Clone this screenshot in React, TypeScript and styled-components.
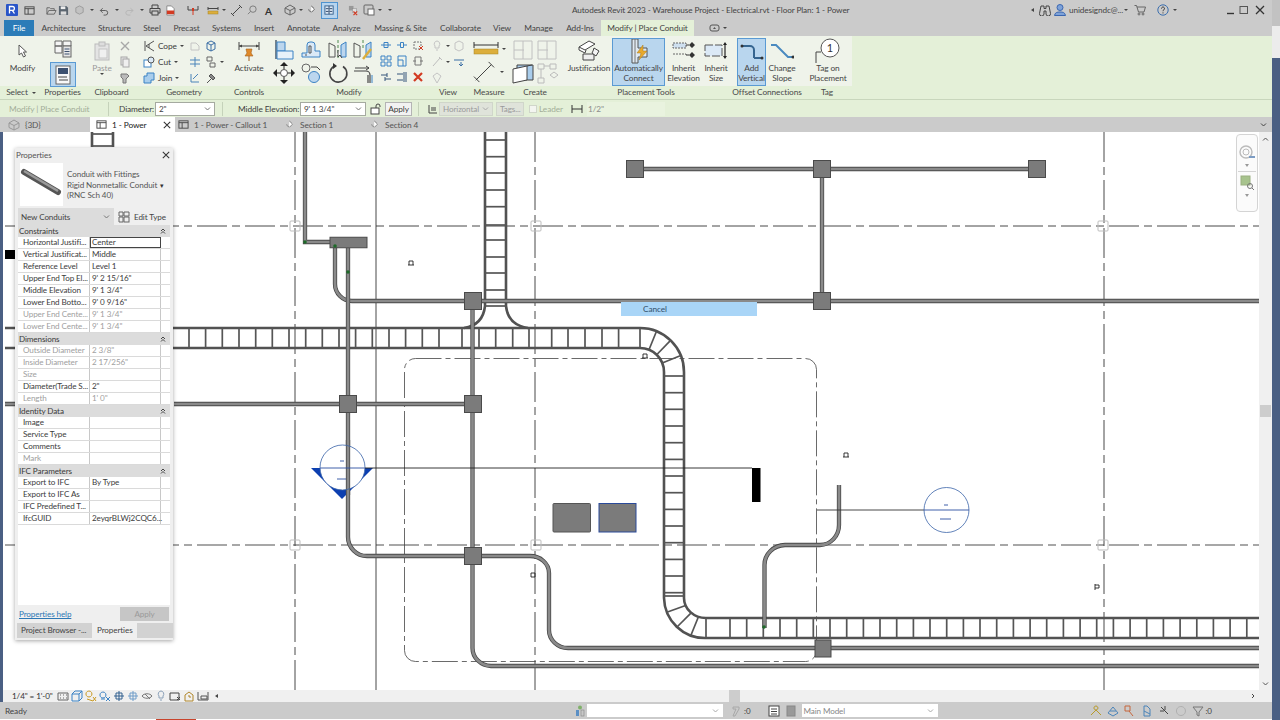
import React from 'react';
import styled, { createGlobalStyle } from 'styled-components';

const GlobalStyle = createGlobalStyle`
  html, body { margin: 0; padding: 0; width: 1280px; height: 720px; overflow: hidden; }
  body {
    font-family: "Lato", "Open Sans", sans-serif;
    font-size: 8.3px;
    letter-spacing: -0.1px;
    color: #3c3c3c;
    background: linear-gradient(to bottom, #c2c2c2 0 26px, #ececec 26px 58px, #4a5f83 58px);
  }
`;

const Window = styled.div`
  width: 1272px;
  height: 720px;
  display: flex;
  flex-direction: column;
`;

const TitleBar = styled.div`
  height: 20px;
  display: flex;
  align-items: center;
  background: #cbcbcb;
  padding-left: 6px;
`;

const Slot = styled.span<{ $ml?: number }>`
  display: flex;
  align-items: center;
  flex: none;
  margin-left: ${(p) => p.$ml ?? 0}px;
`;

const Caret = styled.span<{ $ml?: number }>`
  flex: none;
  width: 0;
  height: 0;
  margin-left: ${(p) => p.$ml ?? 0}px;
  border-left: 2px solid transparent;
  border-right: 2px solid transparent;
  border-top: 2px solid #444;
`;

const LeftCaret = styled.span<{ $ml?: number }>`
  flex: none;
  width: 0;
  height: 0;
  margin-left: ${(p) => p.$ml ?? 0}px;
  border-top: 2.5px solid transparent;
  border-bottom: 2.5px solid transparent;
  border-right: 3px solid #444;
`;

const ThinLines = styled.span<{ $ml?: number }>`
  flex: none;
  width: 15px;
  height: 15px;
  margin-left: ${(p) => p.$ml ?? 0}px;
  display: flex;
  align-items: center;
  justify-content: center;
  background: #b7d4ee;
  border: 1px solid #4f93cf;
`;

const WindowTitle = styled.span`
  margin-left: 180px;
  font-size: 8.2px;
  white-space: nowrap;
  width: 276px;
  flex: none;
  color: #444;
`;

const UserName = styled.span`
  flex: none;
  margin-left: 3px;
  width: 55px;
  font-size: 8.2px;
  white-space: nowrap;
  color: #444;
`;

const TabBar = styled.div`
  height: 16px;
  background: #cbcbcb;
`;

const RibbonTab = styled.div<{ $x: number; $w: number; $kind?: 'file' | 'context' }>`
  position: absolute;
  top: 20px;
  left: ${(p) => p.$x}px;
  width: ${(p) => p.$w}px;
  height: 16px;
  line-height: 17px;
  display: flex;
  justify-content: center;
  align-items: center;
  white-space: nowrap;
  font-size: 8.3px;
  background: ${(p) => (p.$kind === 'file' ? '#2c7cb8' : p.$kind === 'context' ? '#e4f0d8' : 'transparent')};
  color: ${(p) => (p.$kind === 'file' ? '#fff' : '#444')};
`;

const Ribbon = styled.div`
  height: 63px;
  display: flex;
  background: #e4f0d8;
`;

const Panel = styled.div<{ $w: number }>`
  width: ${(p) => p.$w}px;
  flex: none;
  display: flex;
  flex-direction: column;
`;

const PanelBody = styled.div<{ $pl?: number }>`
  height: 50px;
  display: flex;
  align-items: flex-start;
  padding-left: ${(p) => p.$pl ?? 0}px;
  background: #eff3ea;
`;

const PanelLabel = styled.div`
  height: 13px;
  line-height: 13px;
  display: flex;
  justify-content: center;
  align-items: center;
  gap: 4px;
  font-size: 8.3px;
  color: #4a4a4a;
  white-space: nowrap;
`;

const Tool = styled.div<{ $w: number; $active?: boolean; $muted?: boolean; $ml?: number }>`
  width: ${(p) => p.$w}px;
  height: 48px;
  flex: none;
  box-sizing: border-box;
  margin-top: 2px;
  margin-left: ${(p) => p.$ml ?? 0}px;
  display: flex;
  flex-direction: column;
  align-items: center;
  font-size: 8.3px;
  line-height: 10px;
  text-align: center;
  white-space: nowrap;
  color: ${(p) => (p.$muted ? '#9a9a9a' : '#454545')};
  background: ${(p) => (p.$active ? '#b9d6ee' : 'transparent')};
  outline: ${(p) => (p.$active ? '1px solid #5a9ad3' : 'none')};
  outline-offset: -1px;
`;

const ToolIcon = styled.div`
  height: 25px;
  flex: none;
  display: flex;
  align-items: center;
  justify-content: center;
`;

const PropertiesStack = styled.div`
  width: 41px;
  display: flex;
  flex-direction: column;
  align-items: center;
  gap: 3px;
  padding-top: 3px;
`;

const ActiveSquare = styled.div`
  width: 26px;
  height: 25px;
  display: flex;
  align-items: center;
  justify-content: center;
  background: #b9d6ee;
  border: 1px solid #5a9ad3;
  box-sizing: border-box;
`;

const SmallColumn = styled.div<{ $w: number; $ml?: number }>`
  width: ${(p) => p.$w}px;
  margin-left: ${(p) => p.$ml ?? 0}px;
  flex: none;
  display: flex;
  flex-direction: column;
  padding-top: 2px;
`;

const SmallRow = styled.div<{ $h?: number }>`
  height: ${(p) => p.$h ?? 16}px;
  display: flex;
  align-items: center;
  gap: 3px;
  font-size: 8.3px;
  white-space: nowrap;
`;

const ModifyGrid = styled.div`
  display: grid;
  grid-template-columns: 26px 28px 25px 26px;
  grid-auto-rows: 23px;
  justify-items: center;
  align-items: center;
  padding-top: 2px;
`;

const CreateGrid = styled.div`
  display: grid;
  grid-template-columns: 24px 24px;
  grid-auto-rows: 23px;
  justify-items: center;
  align-items: center;
  padding-top: 2px;
`;

const SmallGrid = styled.div`
  display: grid;
  grid-template-columns: repeat(3, 16px);
  grid-auto-rows: 16px;
  justify-items: center;
  align-items: center;
  padding-top: 1px;
  margin-left: 2px;
`;

const OptionsBar = styled.div`
  height: 17px;
  border-top: 1px solid #c8d6bc;
  display: flex;
  align-items: center;
  background: #e4f0d8;
  white-space: nowrap;
  font-size: 8.3px;
`;

const OptionText = styled.span<{ $ml: number; $w: number; $muted?: boolean }>`
  flex: none;
  width: ${(p) => p.$w}px;
  margin-left: ${(p) => p.$ml}px;
  color: ${(p) => (p.$muted ? '#a3ae99' : '#404040')};
`;

const OptionDivider = styled.span<{ $ml: number }>`
  flex: none;
  width: 1px;
  height: 14px;
  margin-left: ${(p) => p.$ml}px;
  background: #c5d2ba;
`;

const Combo = styled.div<{ $ml: number; $w: number; $disabled?: boolean }>`
  flex: none;
  box-sizing: border-box;
  margin-left: ${(p) => p.$ml}px;
  width: ${(p) => p.$w}px;
  height: 14px;
  padding: 0 3px;
  display: flex;
  align-items: center;
  justify-content: space-between;
  border: 1px solid ${(p) => (p.$disabled ? '#d0d6ca' : '#a5aaa0')};
  background: ${(p) => (p.$disabled ? '#dfe3da' : '#fff')};
  color: ${(p) => (p.$disabled ? '#9a9a9a' : '#404040')};
  font-size: 8.1px;
`;

const ApplyButton = styled.div`
  flex: none;
  box-sizing: border-box;
  margin-left: 3px;
  width: 27px;
  height: 14px;
  line-height: 12px;
  text-align: center;
  background: #f2f2f2;
  border: 1px solid #b4b4b4;
`;

const WideInput = styled.div`
  flex: none;
  box-sizing: border-box;
  margin-left: 4px;
  width: 78px;
  height: 14px;
  line-height: 14px;
  padding-left: 1px;
  color: #8b8b8b;
  background: #e9f3df;
`;

const CheckBox = styled.span`
  flex: none;
  box-sizing: border-box;
  width: 8px;
  height: 8px;
  margin-left: 5px;
  background: #f3f5f0;
  border: 1px solid #d0d6ca;
`;

const DocTabs = styled.div`
  height: 15px;
  display: flex;
  align-items: center;
  background: #cbcbcb;
`;

const DocTab = styled.div<{ $w: number; $active?: boolean; $ml?: number; $pl?: number }>`
  flex: none;
  box-sizing: border-box;
  width: ${(p) => p.$w}px;
  height: 15px;
  margin-left: ${(p) => p.$ml ?? 0}px;
  padding-left: ${(p) => p.$pl ?? 0}px;
  display: flex;
  align-items: center;
  gap: 5px;
  white-space: nowrap;
  font-size: 8.3px;
  background: ${(p) => (p.$active ? '#fff' : 'transparent')};
  color: ${(p) => (p.$active ? '#222' : '#555')};
`;

const TabClose = styled.span`
  margin-left: auto;
  margin-right: 4px;
`;

const TabMenu = styled.span`
  margin-left: auto;
  margin-right: 5px;
`;

const Workspace = styled.div`
  height: 558px;
  margin-left: 3px;
  position: relative;
  display: flex;
  background: #fff;
`;

const DrawingArea = styled.div`
  flex: 1;
  overflow: hidden;
  svg { display: block; }
`;

const VScroll = styled.div`
  width: 13px;
  flex: none;
  display: flex;
  flex-direction: column;
  align-items: center;
  background: #f0f0f0;
  font-size: 8px;
  color: #555;
`;

const VThumb = styled.div`
  width: 11px;
  height: 12px;
  margin-top: 259px;
  margin-bottom: auto;
  background: #cdcdcd;
`;

const ArrowSlot = styled.span`
  height: 14px;
  display: flex;
  align-items: center;
`;

const CancelStrip = styled.div`
  position: absolute;
  left: 618px;
  top: 170px;
  width: 136px;
  height: 14px;
  line-height: 14px;
  padding-left: 22px;
  box-sizing: border-box;
  font-size: 8.3px;
  background: #a9d5f7;
  color: #33506b;
`;

const NavBar = styled.div`
  position: absolute;
  left: 1233px;
  top: 2px;
  width: 22px;
  height: 78px;
  box-sizing: border-box;
  padding-top: 8px;
  display: flex;
  flex-direction: column;
  align-items: center;
  border: 1px solid #d4d4d4;
  border-radius: 4px;
  background: #fbfbfb;
`;

const NavRule = styled.div`
  width: 18px;
  height: 1px;
  margin: 4px 0 3px;
  background: #d4d4d4;
`;

const NavCaret = styled.span`
  width: 0;
  height: 0;
  margin-top: 3px;
  border-left: 2px solid transparent;
  border-right: 2px solid transparent;
  border-top: 3px solid #999;
`;

const PropsPalette = styled.div`
  position: absolute;
  left: 12px;
  top: 16px;
  width: 158px;
  height: 492px;
  box-sizing: border-box;
  padding: 0 3px 2px;
  display: flex;
  flex-direction: column;
  background: #efefef;
  box-shadow: 0 1px 4px rgba(0, 0, 0, 0.35);
  font-size: 8.1px;
`;

const PaletteTitle = styled.div`
  height: 14px;
  display: flex;
  align-items: center;
  justify-content: space-between;
  color: #555;
  margin-left: -2px;
`;

const TypeRow = styled.div`
  height: 45px;
  display: flex;
  align-items: flex-start;
  gap: 4px;
  margin: 1px 0 0 2px;
`;

const TypePreview = styled.div`
  width: 43px;
  height: 43px;
  flex: none;
  display: flex;
  align-items: center;
  justify-content: center;
  background: #fff;
`;

const TypeName = styled.div`
  padding-top: 6px;
  line-height: 10.7px;
  color: #555;
  white-space: nowrap;
  span { margin-left: 3px; font-size: 7px; color: #333; }
`;

const InstanceRow = styled.div`
  height: 17px;
  display: flex;
  align-items: center;
  gap: 4px;
`;

const InstanceCombo = styled.div`
  width: 96px;
  height: 17px;
  box-sizing: border-box;
  padding: 0 4px 0 3px;
  display: flex;
  align-items: center;
  justify-content: space-between;
  background: #dcdcdc;
  color: #444;
`;

const EditType = styled.div`
  display: flex;
  align-items: center;
  gap: 4px;
  color: #444;
`;

const PropTable = styled.div`
  background: #fff;
`;

const SectionRow = styled.div`
  height: 12px;
  display: flex;
  align-items: center;
  justify-content: space-between;
  padding: 0 4px 0 1px;
  background: #dcdcdc;
  color: #3a3a3a;
`;

const PropRow = styled.div<{ $muted?: boolean }>`
  height: 12px;
  box-sizing: border-box;
  display: grid;
  grid-template-columns: 72px 71px 9px;
  border-bottom: 1px solid #dadada;
  color: ${(p) => (p.$muted ? '#a0a0a0' : '#3c3c3c')};
  white-space: nowrap;
  line-height: 11px;
`;

const PropName = styled.div`
  padding-left: 5px;
  border-right: 1px solid #c8c8c8;
`;

const PropValue = styled.div<{ $focus?: boolean }>`
  padding-left: 2px;
  outline: ${(p) => (p.$focus ? '1px solid #444' : 'none')};
  outline-offset: -1px;
  border-right: 1px solid #c8c8c8;
`;

const PaletteBlank = styled.div`
  flex: 1;
  background: #fff;
`;

const PaletteFoot = styled.div`
  height: 18px;
  display: flex;
  align-items: center;
  justify-content: space-between;
  padding: 0 1px;
`;

const HelpLink = styled.span`
  color: #2d78b5;
  text-decoration: underline;
`;

const DimApply = styled.div`
  width: 49px;
  height: 14px;
  line-height: 14px;
  text-align: center;
  background: #c6c6c6;
  color: #9a9a9a;
`;

const PaletteTabs = styled.div`
  height: 15px;
  display: flex;
  align-items: stretch;
  margin: 0 -1px;
`;

const PaletteTab = styled.div<{ $w: number; $on?: boolean }>`
  width: ${(p) => p.$w}px;
  flex: none;
  line-height: 15px;
  padding-left: ${(p) => (p.$on ? 5 : 4)}px;
  box-sizing: border-box;
  white-space: nowrap;
  background: ${(p) => (p.$on ? 'transparent' : '#d2d2d2')};
  color: #444;
`;

const ViewBar = styled.div`
  height: 12px;
  margin-left: 3px;
  display: flex;
  align-items: center;
  background: #f0f0f0;
  font-size: 8.1px;
  color: #333;
  position: relative;
`;

const ScaleText = styled.span`
  flex: none;
  width: 45px;
  margin-left: 9px;
  white-space: nowrap;
`;

const HThumb = styled.span`
  position: absolute;
  left: 726px;
  top: 0;
  width: 11px;
  height: 12px;
  background: #cdcdcd;
`;

const ScrollEnd = styled.span`
  display: flex;
  margin-left: auto;
  margin-right: 16px;
`;

const StatusBar = styled.div`
  height: 17px;
  display: flex;
  align-items: center;
  background: #cbcbcb;
  font-size: 8.3px;
  color: #444;
`;

const ReadyText = styled.span`
  flex: none;
  width: 568px;
  margin-left: 5px;
`;

const StatusCombo = styled.div<{ $w: number; $ml: number }>`
  flex: none;
  box-sizing: border-box;
  width: ${(p) => p.$w}px;
  margin-left: ${(p) => p.$ml}px;
  height: 13px;
  padding: 0 4px 0 1px;
  display: flex;
  align-items: center;
  justify-content: space-between;
  background: #fff;
  color: #888;
  font-size: 8.1px;
`;

const StatusCount = styled.span<{ $ml?: number }>`
  flex: none;
  margin-left: ${(p) => p.$ml ?? 0}px;
  font-size: 8px;
`;

const BottomEdge = styled.div`
  height: 1px;
  padding-left: 156px;
  background: #fff;
`;

const RedMark = styled.div`
  width: 40px;
  height: 1px;
  background: #c8442c;
`;

const Svg = styled.svg`
  display: block;
  flex: none;
  fill: none;
`;

const Icon = ({ s = 12, vb = 12, children }: { s?: number; vb?: number; children: React.ReactNode }) => (
  <Svg width={s} height={s} viewBox={`0 0 ${vb} ${vb}`}>
    {children}
  </Svg>
);

const Chev = ({ c = '#777', up }: { c?: string; up?: boolean }) => (
  <Icon s={7} vb={7}>
    <path d={up ? 'M1 4.5 3.5 2 6 4.5' : 'M1 2.5 3.5 5 6 2.5'} stroke={c} />
  </Icon>
);

const FoldMark = () => (
  <Icon s={6} vb={6}>
    <path d="M1 3 3 1 5 3M1 5.5l2-2 2 2" stroke="#333" strokeWidth=".9" />
  </Icon>
);

const ink = '#454545';
const blue = '#3b82c4';
const gray = '#a8a8a8';
const red = '#d23a22';
const gold = '#dcae3c';

// quick access toolbar
const RevitLogo = () => (
  <Icon>
    <rect x="0" y="0" width="12" height="12" rx="1" fill="#2a55c8" />
    <path d="M3.5 9.5V2.5h3a1.8 1.8 0 0 1 0 3.8h-3M6.3 6.3l2.2 3.2" stroke="#fff" strokeWidth="1.3" />
  </Icon>
);
const PageIcon = () => (
  <Icon s={11}>
    <rect x="1" y="2" width="10" height="8" stroke={ink} />
    <path d="M1 4h10M4.5 4v6" stroke={ink} />
  </Icon>
);
const OpenIcon = () => (
  <Icon s={11}>
    <path d="M1 10V3h3l1 1h4v2M1 10l2-4h8l-2 4z" stroke="#666" />
  </Icon>
);
const SaveIcon = () => (
  <Icon s={11}>
    <path d="M1 1h8l2 2v8H1z" fill="#5c6670" />
    <rect x="3" y="1.5" width="5" height="3" fill="#eee" />
    <rect x="3" y="7" width="6" height="3.6" fill="#ddd" />
  </Icon>
);
const SyncIcon = () => (
  <Icon s={11}>
    <path d="M6 1l4 2v5l-4 2-4-2V3z" fill="#c2c2c2" stroke="#999" />
  </Icon>
);
const UndoIcon = ({ flip, c = '#555' }: { flip?: boolean; c?: string }) => (
  <Icon s={11}>
    <path
      d={flip ? 'M10 6H4.5a2.5 2.5 0 0 0 0 5H7M10 6 7 3.5M10 6 7 8.5' : 'M1.5 6H7a2.5 2.5 0 0 1 0 5H5M1.5 6 4 3.5M1.5 6 4 8.5'}
      stroke={c}
    />
  </Icon>
);
const PrintIcon = () => (
  <Icon>
    <path d="M3 4V1h6v3M3 9H1V4.5h10V9H9" stroke={ink} />
    <rect x="3" y="7" width="6" height="4" stroke={ink} />
  </Icon>
);
const PdfIcon = () => (
  <Icon s={11}>
    <path d="M2 1h5l3 3v7H2z" fill="#fff" stroke="#888" />
    <rect x="2" y="6" width="8" height="4" fill={red} />
  </Icon>
);
const TagLineIcon = () => (
  <Icon>
    <path d="M1 2v4h10V2" stroke={ink} />
    <path d="M6 4v3" stroke={red} strokeWidth="2" />
    <path d="M6 7v4" stroke={red} />
  </Icon>
);
const RulerIcon = () => (
  <Icon>
    <path d="M1 3v3M11 3v3M1 4.5h10" stroke={ink} />
    <rect x="1" y="7" width="10" height="3" fill={gold} stroke="#a58427" strokeWidth=".5" />
  </Icon>
);
const DiagonalIcon = ({ s = 11 }: { s?: number }) => (
  <Icon s={s} vb={11}>
    <path d="M1.5 9.5 9.5 1.5" stroke={ink} />
    <path d="M0 8l3 3M8 0l3 3" stroke={ink} />
  </Icon>
);
const ArcTagIcon = () => (
  <Icon s={11}>
    <circle cx="6.5" cy="4.5" r="3.5" stroke="#777" />
    <path d="M1 10l3-3" stroke="#777" />
  </Icon>
);
const TextToolIcon = () => (
  <Icon s={11} vb={11}>
    <text x="5.5" y="9.5" textAnchor="middle" fontSize="10" fontWeight="700" fontFamily="Lato" letterSpacing="0" fill="#333">
      A
    </text>
  </Icon>
);
const HouseIcon = ({ c = '#666' }: { c?: string }) => (
  <Icon>
    <path d="M6 1 11 4v4.5L6 11 1 8.5V4z" stroke={c} />
    <path d="M1 4l5 2.5L11 4M6 6.5V11" stroke={c} />
  </Icon>
);
const SectionIcon = ({ c = '#666' }: { c?: string }) => (
  <Icon s={10}>
    <path d="M2 5a3 3 0 1 0 3-3" stroke={c} />
    <path d="M5 1l4 4-4 4" stroke={c} fill="#fff" />
  </Icon>
);
const ThinIcon = () => (
  <Icon s={11}>
    <rect x="1" y="1" width="9" height="9" fill="#dde9f4" stroke="#355f8c" />
    <path d="M2 4h3M6 4h3M2 7h3M6 7h3M5.5 1v9" stroke="#263f66" />
  </Icon>
);
const CloseHiddenIcon = () => (
  <Icon s={11}>
    <rect x="1" y="1" width="5" height="5" fill="#999" />
    <rect x="5" y="4" width="4" height="4" fill="#dedede" stroke="#888" strokeWidth=".5" />
    <path d="M6 7l4 4M10 7l-4 4" stroke={red} strokeWidth="1.3" />
  </Icon>
);
const SwitchIcon = () => (
  <Icon>
    <rect x="1" y="1" width="9" height="9" rx="1" stroke="#666" />
    <rect x="5" y="5" width="6" height="6" fill="#fff" stroke="#666" />
  </Icon>
);

// title bar right
const BinocularsIcon = () => (
  <Icon>
    <path d="M2 2h3v2.5H7V2h3l1.5 7.5a1.8 1.8 0 0 1-4.5.5V7H5v3a1.8 1.8 0 0 1-4.5-.5z" stroke="#444" />
  </Icon>
);
const UserIcon = () => (
  <Icon>
    <circle cx="6" cy="3.5" r="3" fill="#7ea2d8" stroke="#3a66b0" />
    <path d="M.5 11.5C1 8.5 3 8 6 8s5 .5 5.5 3.5z" fill="#7ea2d8" stroke="#3a66b0" />
  </Icon>
);
const CartIcon = () => (
  <Icon>
    <path d="M.5 1.5h2l2 6.5h5.5l1.5-5H3" stroke="#666" />
    <circle cx="5" cy="10" r="1" stroke="#666" />
    <circle cx="9" cy="10" r="1" stroke="#666" />
  </Icon>
);
const HelpIcon = () => (
  <Icon>
    <circle cx="6" cy="6" r="5.2" stroke="#3c6fae" />
    <path d="M4.5 4.5a1.5 1.5 0 1 1 2.3 1.3C6.2 6.2 6 6.5 6 7.2M6 8.4v1" stroke="#333" />
  </Icon>
);
const WinMin = () => (
  <Icon s={10} vb={10}>
    <path d="M1 8.5h7" stroke="#333" strokeWidth="1.4" />
  </Icon>
);
const WinMax = () => (
  <Icon s={10} vb={10}>
    <rect x="1" y="1.5" width="7.5" height="7" stroke="#555" />
  </Icon>
);
const WinClose = ({ s = 10 }: { s?: number }) => (
  <Icon s={s} vb={10}>
    <path d="M1 1l8 8M9 1 1 9" stroke="#333" strokeWidth="1.3" />
  </Icon>
);
const ContextIcon = () => (
  <Icon s={12} vb={12}>
    <rect x="1" y="3" width="9" height="6" rx="2" stroke="#555" />
    <path d="M4 7l1.5-2L7 7z" fill="#555" />
  </Icon>
);

// ribbon, large
const ArrowTool = () => (
  <Icon s={14} vb={14}>
    <path d="M3 1v10l2.5-2 2 4 2-1-2-4h3z" fill="#fff" stroke="#555" />
  </Icon>
);
const TypePropsIcon = () => (
  <Icon s={20} vb={20}>
    <path d="M2 2h7v5H2zM2 7h7v7H2zM10 2h8v5h-8z" fill="#f4f4f4" stroke="#666" />
    <rect x="10" y="7" width="8" height="11" fill="#e6e6e6" stroke="#666" />
    <path d="M11.5 10h5M11.5 12.5h5M11.5 15h5" stroke="#3d5170" />
  </Icon>
);
const PropsIcon = () => (
  <Icon s={20} vb={20}>
    <rect x="3" y="1" width="14" height="18" fill="#f8f8f8" stroke="#666" />
    <rect x="5" y="3" width="10" height="6" fill="#3d5170" />
    <path d="M5 12h7M8 15h7" stroke="#444" />
    <path d="M13 11v2M7 14v2" stroke="#444" />
  </Icon>
);
const PasteIcon = () => (
  <Icon s={20} vb={20}>
    <rect x="3" y="3" width="14" height="16" fill="#e4e4e4" stroke="#bbb" />
    <rect x="7" y="1" width="6" height="4" fill="#ddd" stroke="#bbb" />
    <rect x="7" y="8" width="8" height="9" fill="#f0f0f0" stroke="#c4c4c4" />
  </Icon>
);
const ActivateIcon = () => (
  <Icon s={24} vb={24}>
    <path d="M2 3v8M22 3v8M2 7h20" stroke="#444" />
    <path d="M2 7l3-1.5v3zM22 7l-3-1.5v3z" fill="#444" />
    <path d="M9 10h6l-1 4 2 3H8l2-3z" fill="#e08a2c" stroke="#a55f1a" strokeWidth=".6" />
    <path d="M12 17v5" stroke="#a55f1a" />
  </Icon>
);
const AlignIcon = () => (
  <Icon s={22} vb={22}>
    <path d="M3 1v19" stroke="#3d4f66" strokeWidth="1.4" />
    <path d="M4 3h8v9H4z" fill="#bcd6ee" stroke={blue} />
    <path d="M4 12h16v8H4z" fill="#e8f1f9" stroke={blue} />
  </Icon>
);
const OffsetIcon = () => (
  <Icon s={22} vb={22}>
    <path d="M2 18v-4h5V6a3 3 0 0 1 3-3h2a3 3 0 0 1 3 3v6h5v6z" fill="#dbe9f6" stroke={blue} />
    <path d="M5 16h2M9 7v7h2V7z" stroke="#555" />
  </Icon>
);
const MirrorPickIcon = () => (
  <Icon s={22} vb={22}>
    <path d="M2 4l6 3v11H2z" stroke="#555" />
    <path d="M19 3l-5 3v12h5z" fill="#bcd6ee" stroke={blue} />
    <path d="M11 1v20" stroke="#4f8a4f" strokeDasharray="3 2" />
    <path d="M11 11v7l2-2 2 3" stroke="#444" fill="#fff" />
  </Icon>
);
const MirrorDrawIcon = () => (
  <Icon s={22} vb={22}>
    <path d="M2 4l6 3v11H2z" stroke="#555" />
    <path d="M19 3l-5 3v12h5z" fill="#bcd6ee" stroke={blue} />
    <path d="M11 20 19 10" stroke={gold} strokeWidth="2.4" />
    <path d="M11 1v9" stroke="#4f8a4f" strokeDasharray="3 2" />
  </Icon>
);
const MoveIcon = () => (
  <Icon s={22} vb={22}>
    <path d="M11 0l4 4h-8zM11 22l4-4H7zM0 11l4-4v8zM22 11l-4-4v8z" fill="#222" />
    <circle cx="11" cy="11" r="3.5" fill="#fff" stroke="#555" />
    <path d="M7 11h-3M15 11h3M11 7V4M11 15v3" stroke="#222" />
  </Icon>
);
const CopyIcon = () => (
  <Icon s={22} vb={22}>
    <circle cx="6" cy="6" r="4" stroke="#666" />
    <circle cx="14" cy="15" r="5.5" fill="#bcd6ee" stroke={blue} />
    <path d="M11 5h6l3 3" stroke="#444" />
  </Icon>
);
const RotateIcon = () => (
  <Icon s={22} vb={22}>
    <path d="M16 4.5A8.5 8.5 0 1 1 7 4.3" stroke="#444" strokeWidth="1.6" />
    <path d="M6 1l4 3-4 3z" fill="#333" />
  </Icon>
);
const TrimIcon = () => (
  <Icon s={22} vb={22}>
    <path d="M2 9h12a4 4 0 0 1 4 4v8M16 21v-8" stroke="#444" strokeWidth="1.2" />
    <path d="M3 6h14l-3-2M17 6l-3 2" stroke="#444" />
    <path d="M20 13v8" stroke={blue} />
  </Icon>
);
const Splitter = ({ kind }: { kind: number }) => {
  const paths = [
    <path key="a" d="M1 6h10M4 3.5h4v5H4z" stroke={blue} />,
    <path key="b" d="M1 6h3M8 6h3M4.5 3.5h3v5h-3z" stroke={blue} />,
    <path key="c" d="M4 1v7h7M2 3h6v6" stroke="#777" />,
    <path key="d" d="M1 1h4v4H1zM7 1h4v4H7zM1 7h4v4H1zM7 7h4v4H7z" stroke={blue} />,
    <path key="e" d="M2 1h8v10H2zM2 5h5v6" stroke={blue} />,
    <path key="f" d="M3 2h6v8H3zM1 6h3M8 6h3" stroke="#777" />,
    <path key="g" d="M1 4h6M7 2v4M11 8H5M5 6v4" stroke="#35557a" />,
    <path key="h" d="M1 3h6M1 9h6M8 1v10M10 1v10" stroke="#35557a" />,
  ];
  return <Icon>{paths[kind]}</Icon>;
};
const RedX = () => (
  <Icon>
    <path d="M2 2l8 8M10 2l-8 8" stroke={red} strokeWidth="2.2" />
  </Icon>
);
const MarkedBox = () => (
  <Icon>
    <path d="M2 3h7v7H2z" stroke="#777" strokeDasharray="2 1" />
    <path d="M7 7l4 4M11 7l-4 4" stroke={red} />
  </Icon>
);
const CopeIcon = () => (
  <Icon>
    <path d="M2 1v10M3 6l8-5M3 6l8 5M6 4v4" stroke="#555" />
  </Icon>
);
const CutIcon = () => (
  <Icon>
    <rect x="1" y="4" width="7" height="7" fill="#fff" stroke={blue} />
    <circle cx="8" cy="4" r="3" fill="#dbe9f6" stroke="#555" />
  </Icon>
);
const JoinIcon = () => (
  <Icon>
    <path d="M4 1h7v7H8v3H1V4h3z" fill="#a9cdec" stroke={blue} />
  </Icon>
);
const ScissorsGray = () => (
  <Icon>
    <path d="M2 2l8 8M10 2l-8 8" stroke={gray} strokeWidth="1.4" />
  </Icon>
);
const CopyGray = () => (
  <Icon>
    <rect x="2" y="1" width="6" height="8" fill="#e6e6e6" stroke={gray} />
    <rect x="4" y="3" width="6" height="8" fill="#efefef" stroke={gray} />
  </Icon>
);
const BrushIcon = () => (
  <Icon>
    <path d="M2 2h6l2 2-3 3v4H4V7L2 5z" fill="#bbb" stroke="#777" />
  </Icon>
);
const MiniIcon = ({ d, c = '#777', fill = 'none' }: { d: string; c?: string; fill?: string }) => (
  <Icon>
    <path d={d} stroke={c} fill={fill} />
  </Icon>
);
const JustifyIcon = () => (
  <Icon s={24} vb={24}>
    <path d="M2 8l10-6 6 3-10 6zM2 8v3l6 3 1-3" fill="#fff" stroke="#444" />
    <path d="M6 15h11v6H6z" fill="#eee" stroke="#444" />
    <path d="M17 9l5 3-3 5-4-3 1-2z" fill="#f3f3f3" stroke="#444" />
  </Icon>
);
const AutoConnectIcon = () => (
  <Icon s={26} vb={26}>
    <path d="M6 1h6v9h9v9H12v6H6z" fill="#dfe9f2" stroke="#555" />
    <path d="M9 1v24" stroke="#777" />
    <path d="M17 7l-6 8h4l-2 7 8-9h-4z" fill="#e8a92c" stroke="#a9781c" strokeWidth=".5" />
  </Icon>
);
const InheritElevationIcon = () => (
  <Icon s={24} vb={24}>
    <path d="M1 4h13v5H1z" fill="#cfe0ef" stroke="#666" strokeDasharray="2 1" />
    <path d="M1 15h13v1" stroke="#666" strokeDasharray="2 1" />
    <path d="M17 6l3-3 3 3-3 3zM17 16l3-3 3 3-3 3z" fill="#333" />
    <path d="M14 6h3M14 16h3" stroke="#333" />
  </Icon>
);
const InheritSizeIcon = () => (
  <Icon s={24} vb={24}>
    <path d="M1 6h17v11H1z" fill="#dbe9f6" stroke="#555" strokeDasharray="8 2" />
    <path d="M21 6v11" stroke="#222" strokeWidth="1.2" />
    <path d="M19 6l2-3 2 3zM19 17l2 3 2-3z" fill="#222" />
  </Icon>
);
const AddVerticalIcon = () => (
  <Icon s={24} vb={24}>
    <path d="M1 7h9a4 4 0 0 1 4 4v8" stroke="#35658f" strokeWidth="2" />
    <path d="M14 19h8" stroke="#35658f" strokeWidth="2" />
    <circle cx="2" cy="7" r="1.5" fill="#333" />
    <circle cx="22" cy="19" r="1.5" fill="#333" />
  </Icon>
);
const ChangeSlopeIcon = () => (
  <Icon s={24} vb={24}>
    <path d="M1 6h5l12 12h5" stroke="#4a8ac0" strokeWidth="2" />
    <circle cx="23" cy="18" r="1.5" fill="#333" />
  </Icon>
);
const TagPlacementIcon = () => (
  <Icon s={26} vb={26}>
    <path d="M1 25V14h5" stroke="#444" />
    <circle cx="15" cy="10" r="9" fill="#fff" stroke="#555" />
    <text x="15" y="14" textAnchor="middle" fontSize="11" fontFamily="Lato" fill="#333">
      1
    </text>
  </Icon>
);
const DiagonalBig = () => (
  <Icon s={22} vb={24}>
    <path d="M3 21 20 4" stroke="#333" />
    <path d="M1 17l6 6M17 1l6 6" stroke="#333" />
  </Icon>
);
const RulerWide = () => (
  <Icon s={26} vb={26}>
    <path d="M1 6v6M25 6v6M1 9h24" stroke="#333" />
    <rect x="1" y="13" width="24" height="5" fill={gold} stroke="#a58427" strokeWidth=".5" />
  </Icon>
);
const DashedBox = ({ s = 20 }: { s?: number }) => (
  <Icon s={s} vb={20}>
    <path d="M1 1h18v18H1zM1 10h10M10 1v18" stroke="#c0c0c0" />
  </Icon>
);
const CreateGroupIcon = () => (
  <Icon s={22} vb={22}>
    <path d="M5 3h16v15H5z" fill="#a9cdec" stroke="#444" />
    <path d="M1 7l14-3v14L1 21z" fill="#fff" stroke="#444" />
    <path d="M15 4l5-1" stroke="#444" />
  </Icon>
);
const SmallCreateIcon = () => (
  <Icon s={22} vb={22}>
    <path d="M2 2h6v5H2zM14 2h6v5h-6zM2 16h6v5H2zM14 13l4-3 4 3-4 3zM8 4h6M5 7v9" stroke="#bbb" />
  </Icon>
);

// view bar and status bar
const StatusIcons = ({ list }: { list: [string, string, number][] }) => (
  <>
    {list.map(([d, c, ml], i) => (
      <Slot key={i} $ml={ml}>
        <MiniIcon d={d} c={c} />
      </Slot>
    ))}
  </>
);

const viewBarIcons: [string, string, number][] = [
  ['M1 3h10v7H1zM3 5h1M6 5h1M9 5h1M3 8h1M6 8h1M9 8h1', '#666', 0],
  ['M1 4h7v7H1zM1 4l3-3h7v7l-3 3M8 4l3-3', blue, 2],
  ['M4 1a3 3 0 1 1-.1 0M2 9l6 2M8 7l3 4M11 7l-3 4', '#c99a22', 2],
  ['M4 2a3 3 0 1 1-.1 0M2 9h4M7 7l4 4M11 7l-4 4', '#3b82c4', 2],
  ['M1 6h10M6 1v10M3 3h6v6H3z', '#33608f', 2],
  ['M1 6h10M6 1v10M3 3h6v6H3z', '#6f9cc8', 2],
  ['M1 6c2-3 8-3 10 0-2 3-8 3-10 0zM4 4l5 5', '#777', 2],
  ['M6 1a3 3 0 0 1 2 5v2H4V6a3 3 0 0 1 2-5zM5 10h2', '#8aa0b8', 2],
  ['M1 3h9v7H1zM8 7l3 3M11 7l-3 3', '#444', 2],
  ['M2 11V5l4-3 4 3v6zM5 6h2v2', '#b0862a', 2],
  ['M1 2v8h10V2M4 6h6v3H4z', '#555', 2],
];

const statusIcons: [string, string, number][] = [
  ['M6 1a2 2 0 1 1-.1 0M1 10l5-5 5 5', '#b89a2a', 0],
  ['M1 8l5-6 5 6-5 3zM3 6h6', '#4b84b9', 5],
  ['M2 1h5v5H2zM6 6l4 5', '#c6663c', 4],
  ['M3 1h3l3 3v7H3zM3 6l6 3', '#4b84b9', 6],
  ['M2 2l7 7M1 6h4M6 1v4', '#444', 6],
  ['M6 1.5a4.5 4.5 0 1 1-.1 0', '#b0b0b0', 4],
  ['M1 2h10L7 7v4L5 10V7z', '#777', 5],
];

type PropData = { name: string; value?: string; muted?: boolean; focus?: boolean };
type SectionData = { title: string; rows: PropData[] };

const propSections: SectionData[] = [
  {
    title: 'Constraints',
    rows: [
      { name: 'Horizontal Justifi...', value: 'Center', focus: true },
      { name: 'Vertical Justificat...', value: 'Middle' },
      { name: 'Reference Level', value: 'Level 1' },
      { name: 'Upper End Top El...', value: '9\' 2 15/16"' },
      { name: 'Middle Elevation', value: '9\' 1 3/4"' },
      { name: 'Lower End Botto...', value: '9\' 0 9/16"' },
      { name: 'Upper End Cente...', value: '9\' 1 3/4"', muted: true },
      { name: 'Lower End Cente...', value: '9\' 1 3/4"', muted: true },
    ],
  },
  {
    title: 'Dimensions',
    rows: [
      { name: 'Outside Diameter', value: '2 3/8"', muted: true },
      { name: 'Inside Diameter', value: '2 17/256"', muted: true },
      { name: 'Size', muted: true },
      { name: 'Diameter(Trade S...', value: '2"' },
      { name: 'Length', value: '1\' 0"', muted: true },
    ],
  },
  {
    title: 'Identity Data',
    rows: [{ name: 'Image' }, { name: 'Service Type' }, { name: 'Comments' }, { name: 'Mark', muted: true }],
  },
  {
    title: 'IFC Parameters',
    rows: [
      { name: 'Export to IFC', value: 'By Type' },
      { name: 'Export to IFC As' },
      { name: 'IFC Predefined T...' },
      { name: 'IfcGUID', value: '2eyqrBLWj2CQC6...' },
    ],
  },
];

const ribbonTabs = [
  ['Architecture', 42, 43],
  ['Structure', 98, 33],
  ['Steel', 144, 16],
  ['Precast', 174, 25],
  ['Systems', 212, 29],
  ['Insert', 254, 20],
  ['Annotate', 287, 33],
  ['Analyze', 333, 27],
  ['Massing & Site', 374, 53],
  ['Collaborate', 440, 41],
  ['View', 494, 16],
  ['Manage', 524, 29],
  ['Add-Ins', 566, 28],
] as const;

// the CAD sheet, coordinates are page pixels
const Pipe = ({ d }: { d: string }) => (
  <>
    <path d={d} stroke="#484848" strokeWidth="4.3" />
    <path d={d} stroke="#8a8a8a" strokeWidth="2.7" />
  </>
);

const Box = ({ x, y, w = 17, h = 17, edge = '#4a4a4a' }: { x: number; y: number; w?: number; h?: number; edge?: string }) => (
  <rect x={x - w / 2} y={y - h / 2} width={w} height={h} fill="#7b7b7b" stroke={edge} />
);

const Rail = ({ d }: { d: string }) => <path d={d} stroke="#525252" strokeWidth="2.6" />;

const Rung = ({ x1, y1, x2, y2 }: { x1: number; y1: number; x2: number; y2: number }) => (
  <line x1={x1} y1={y1} x2={x2} y2={y2} stroke="#555" strokeWidth="1.7" />
);

const Tick = ({ x, y, d }: { x: number; y: number; d: string }) => (
  <path transform={`translate(${x} ${y})`} d={d} stroke="#222" strokeWidth="0.9" />
);

const GridMark = ({ x, y }: { x: number; y: number }) => (
  <rect x={x - 5} y={y - 5} width="10" height="10" rx="1" stroke="#bdbdbd" fill="none" />
);

const range = (from: number, to: number, step: number) => {
  const out: number[] = [];
  for (let v = from; v <= to; v += step) out.push(Math.round(v * 10) / 10);
  return out;
};

const radial = (cx: number, cy: number, r1: number, r2: number, deg: number) => {
  const a = (deg * Math.PI) / 180;
  return {
    x1: cx + r1 * Math.cos(a),
    y1: cy + r1 * Math.sin(a),
    x2: cx + r2 * Math.cos(a),
    y2: cy + r2 * Math.sin(a),
  };
};

const topLadderRungs = [...range(172.3, 310, 16.67), 322.3, 339, 355.6, 372.3, 389, 405.6, 422.3, 439, 462, 479, 495.7, 512.7, 529, 551.7, 568, 585, 602, 618.6, 640];
const dash = '30 5 8 5';

const Drawing = () => (
  <svg width="1256" height="558" viewBox="3 132 1256 558" fill="none">
    {/* grids and section lines */}
    <path d="M5 226H1259" stroke="#333" strokeWidth="0.9" strokeDasharray={dash} />
    <path d="M5 545H1259" stroke="#8a8a8a" strokeWidth="1.6" strokeDasharray={dash} />
    {[295, 535, 1104].map((x) => (
      <path key={x} d={`M${x} 132V690`} stroke="#333" strokeWidth="0.9" strokeDasharray={dash} />
    ))}
    <path d="M376 132V690" stroke="#333" strokeWidth="0.9" />
    <rect x="404.5" y="358.5" width="412" height="303" rx="11" stroke="#444" strokeWidth="0.8" strokeDasharray="26 4 5 4" />
    <rect x="5" y="250" width="10" height="9" fill="#000" />
    {[295, 536, 1103].map((x) => (
      <React.Fragment key={x}>
        <GridMark x={x} y={226} />
        <GridMark x={x} y={545} />
      </React.Fragment>
    ))}

    {/* stub above the palette */}
    <Rail d="M92 132V147M113 132V147" />
    <Rung x1={92} y1={134} x2={113} y2={134} />
    <Rung x1={92} y1={146} x2={113} y2={146} />

    {/* ladder trays */}
    <Rail d="M485 132V306Q483 325 464 328M506 132V306Q508 325 528 328" />
    {[140, 156.7, 173, 190, 206.7, 225, 240, 257, 273, 290, 306].map((y) => (
      <Rung key={y} x1={485} y1={y} x2={506} y2={y} />
    ))}
    <Rail d="M5 328H640A44 44 0 0 1 684 372V598M5 348H640A24 24 0 0 1 664 372V598A41 41 0 0 0 706 638H1259M684 598A22 20 0 0 0 706 618H1259" />
    {topLadderRungs.map((x) => (
      <Rung key={x} x1={x} y1={328} x2={x} y2={348} />
    ))}
    {[-68, -46, -22].map((a) => (
      <Rung key={a} {...radial(640, 372, 24, 44, a)} />
    ))}
    {range(376, 593, 16.67).map((y) => (
      <Rung key={y} x1={664} y1={y} x2={684} y2={y} />
    ))}
    <Rung x1={664} y1={596} x2={684} y2={596} />
    {[160, 135, 112].map((a) => (
      <Rung key={a} {...radial(706, 598, 21, 41, a)} />
    ))}
    <Rung x1={706} y1={618} x2={706} y2={638} />
    {range(730, 1256, 16.67).map((x) => (
      <Rung key={x} x1={x} y1={618} x2={x} y2={638} />
    ))}

    {/* conduits */}
    <Pipe d="M305 132V242H331" />
    <Pipe d="M335 247V284A17 17 0 0 0 352 301H1259" />
    <Pipe d="M348 248V537A19 19 0 0 0 367 556H530A19 17 0 0 1 549 573V630A19 18 0 0 0 568 648H1259" />
    <Pipe d="M472.5 301V648A19 18 0 0 0 491 666H1259" />
    <Pipe d="M5 404H15M174 404H473" />
    <Pipe d="M635 169H1037" />
    <Pipe d="M822 169V301" />
    <Pipe d="M839 485V525A19 20 0 0 1 820 545H785A21 20 0 0 0 764.5 565V628" />

    <Box x={348.5} y={242.5} w={37} h={10.5} />
    {[
      [473, 301],
      [348, 404],
      [473, 404],
      [473, 556],
      [635, 169],
      [822, 169],
      [1037, 169],
      [822, 301],
    ].map(([x, y]) => (
      <Box key={`${x}-${y}`} x={x} y={y} />
    ))}
    <Box x={823} y={648.5} w={16} h={17} />
    <rect x="553" y="503.5" width="37.5" height="28.5" rx="1" fill="#7b7b7b" stroke="#555" />
    <rect x="599" y="503.5" width="37" height="28.5" fill="#7b7b7b" stroke="#2a4a9a" />

    {[
      [305, 242],
      [335, 246],
      [348, 272],
      [764, 627],
    ].map(([x, y]) => (
      <circle key={`${x}-${y}`} cx={x} cy={y} r="1.8" fill="#1f6a2a" />
    ))}

    {/* section heads and reference lines */}
    <path d="M311 468H373L342 499Z" fill="#0c3fb0" />
    <circle cx="342.5" cy="467.5" r="22.5" fill="#fff" />
    <Pipe d="M348 440V495" />
    <circle cx="342.5" cy="467.5" r="22.5" stroke="#3a63a8" strokeWidth="0.8" />
    <path d="M320 468H365M340 461H344M337 479H346" stroke="#2a4fa0" strokeWidth="0.9" />
    <path d="M365 468H752" stroke="#222" strokeWidth="0.9" />
    <rect x="752" y="468" width="8.5" height="34" fill="#000" />
    <path d="M817 510H924" stroke="#333" strokeWidth="0.9" />
    <ellipse cx="946.5" cy="510" rx="22.5" ry="22.5" stroke="#3a63a8" strokeWidth="0.8" />
    <path d="M924 510H969M944 505H948M940 519H951" stroke="#2a4fa0" strokeWidth="0.9" />

    {/* little tags */}
    <Tick x={411} y={263} d="M-2 2V-2H2V2M-3 2H3" />
    <Tick x={645} y={356} d="M-2 2V-2H2V2M-3 2H3" />
    <Tick x={533} y={575} d="M-2 -2H2V2H-2Z" />
    <Tick x={846} y={455} d="M-2 2V-2H2V2M-3 2H3" />
    <Tick x={1097} y={587} d="M-2 -3V3M-2 -2H2V1H-2" />
  </svg>
);

const TypePropsSmall = () => (
  <Icon s={12}>
    <path d="M1 1h4v4H1zM6 1h5v4H6zM1 6h4v5H1z" stroke="#666" />
    <rect x="6" y="6" width="5" height="5" stroke="#666" />
  </Icon>
);

const App = () => (
  <>
    <GlobalStyle />
    <Window>
      <TitleBar>
        <RevitLogo />
        <Slot $ml={6}><PageIcon /></Slot>
        <Slot $ml={11}><OpenIcon /></Slot>
        <Slot $ml={1}><SaveIcon /></Slot>
        <Slot $ml={5}><SyncIcon /></Slot>
        <Caret $ml={5} />
        <Slot $ml={5}><UndoIcon /></Slot>
        <Caret $ml={5} />
        <Slot $ml={5}><UndoIcon flip c="#b5b5b5" /></Slot>
        <Caret $ml={5} />
        <Slot $ml={5}><PrintIcon /></Slot>
        <Slot $ml={4}><PdfIcon /></Slot>
        <Slot $ml={11}><TagLineIcon /></Slot>
        <Slot $ml={8}><RulerIcon /></Slot>
        <Caret $ml={3} />
        <Slot $ml={5}><DiagonalIcon /></Slot>
        <Slot $ml={5}><ArcTagIcon /></Slot>
        <Slot $ml={5}><TextToolIcon /></Slot>
        <Slot $ml={10}><HouseIcon /></Slot>
        <Caret $ml={3} />
        <Slot $ml={4}><SectionIcon /></Slot>
        <ThinLines $ml={4}><ThinIcon /></ThinLines>
        <Slot $ml={10}><CloseHiddenIcon /></Slot>
        <Slot $ml={4}><SwitchIcon /></Slot>
        <Caret $ml={3} />
        <Caret $ml={6} />
        <WindowTitle>Autodesk Revit 2023 - Warehouse Project - Electrical.rvt - Floor Plan: 1 - Power</WindowTitle>
        <LeftCaret $ml={183} />
        <Slot $ml={5}><BinocularsIcon /></Slot>
        <Slot $ml={3}><UserIcon /></Slot>
        <UserName>unidesigndc@...</UserName>
        <Caret />
        <Slot $ml={6}><CartIcon /></Slot>
        <Slot $ml={11}><HelpIcon /></Slot>
        <Caret $ml={4} />
        <Slot $ml={49}><WinMin /></Slot>
        <Slot $ml={3}><WinMax /></Slot>
        <Slot $ml={6}><WinClose /></Slot>
      </TitleBar>

      <TabBar />
      <RibbonTab $x={4} $w={30} $kind="file">File</RibbonTab>
      {ribbonTabs.map(([label, x, w]) => (
        <RibbonTab key={label} $x={x} $w={w}>{label}</RibbonTab>
      ))}
      <RibbonTab $x={601} $w={93} $kind="context">Modify | Place Conduit</RibbonTab>
      <RibbonTab $x={708} $w={20}>
        <ContextIcon />
        <Caret $ml={2} />
      </RibbonTab>

      <Ribbon>
        <Panel $w={42}>
          <PanelBody $pl={3}>
            <Tool $w={39}>
              <ToolIcon><ArrowTool /></ToolIcon>
              Modify
            </Tool>
          </PanelBody>
          <PanelLabel>Select <Caret /></PanelLabel>
        </Panel>
        <Panel $w={41}>
          <PanelBody>
            <PropertiesStack>
              <TypePropsIcon />
              <ActiveSquare><PropsIcon /></ActiveSquare>
            </PropertiesStack>
          </PanelBody>
          <PanelLabel>Properties</PanelLabel>
        </Panel>
        <Panel $w={57}>
          <PanelBody $pl={4}>
            <Tool $w={30} $muted>
              <ToolIcon><PasteIcon /></ToolIcon>
              Paste
              <Caret $ml={0} />
            </Tool>
            <SmallColumn $w={16} $ml={2}>
              <SmallRow><ScissorsGray /></SmallRow>
              <SmallRow><CopyGray /></SmallRow>
              <SmallRow><BrushIcon /></SmallRow>
            </SmallColumn>
          </PanelBody>
          <PanelLabel>Clipboard</PanelLabel>
        </Panel>
        <Panel $w={88}>
          <PanelBody $pl={3}>
            <SmallColumn $w={46}>
              <SmallRow><CopeIcon />Cope <Caret /></SmallRow>
              <SmallRow><CutIcon />Cut <Caret /></SmallRow>
              <SmallRow><JoinIcon />Join <Caret /></SmallRow>
            </SmallColumn>
            <SmallColumn $w={16}>
              <SmallRow><MiniIcon d="M2 3h5l3 3v4H2z" c="#c4c4c4" /></SmallRow>
              <SmallRow><MiniIcon d="M1 4h10M1 8h10M6 1v10" c="#4b84b9" /></SmallRow>
              <SmallRow><MiniIcon d="M2 2v8h8M9 2 4 7" c="#4b84b9" /></SmallRow>
            </SmallColumn>
            <SmallColumn $w={18}>
              <SmallRow><MiniIcon d="M2 3l4-2 4 2v6l-4 2-4-2zM2 3l4 2 4-2M6 5v6" c="#3b6ea5" /></SmallRow>
              <SmallRow><MiniIcon d="M2 1h5v4H2zM5 7h5v4H5z" c="#666" /><Caret /></SmallRow>
              <SmallRow><MiniIcon d="M2 11l5-5M6 2l4 4-2 2-4-4z" c="#555" fill="#888" /></SmallRow>
            </SmallColumn>
          </PanelBody>
          <PanelLabel>Geometry</PanelLabel>
        </Panel>
        <Panel $w={42}>
          <PanelBody>
            <Tool $w={42}>
              <ToolIcon><ActivateIcon /></ToolIcon>
              Activate
            </Tool>
          </PanelBody>
          <PanelLabel>Controls</PanelLabel>
        </Panel>
        <Panel $w={158}>
          <PanelBody $pl={1}>
            <ModifyGrid>
              <AlignIcon />
              <OffsetIcon />
              <MirrorPickIcon />
              <MirrorDrawIcon />
              <MoveIcon />
              <CopyIcon />
              <RotateIcon />
              <TrimIcon />
            </ModifyGrid>
            <SmallGrid>
              <Splitter kind={0} />
              <Splitter kind={1} />
              <MarkedBox />
              <Splitter kind={3} />
              <Splitter kind={4} />
              <Splitter kind={5} />
              <Splitter kind={6} />
              <Splitter kind={7} />
              <RedX />
            </SmallGrid>
          </PanelBody>
          <PanelLabel>Modify</PanelLabel>
        </Panel>
        <Panel $w={40}>
          <PanelBody $pl={3}>
            <SmallColumn $w={36}>
              <SmallRow><MiniIcon d="M6 1a3 3 0 0 1 2 5v2H4V6a3 3 0 0 1 2-5zM5 10h2" c="#c4c4c4" /><Caret /><MiniIcon d="M2 3l4-2 4 2v6l-4 2-4-2z" c="#c4c4c4" /></SmallRow>
              <SmallRow><MiniIcon d="M2 10l7-8M8 1l3 3" c="#bdbdbd" /><Caret /><MiniIcon d="M1 4h10M8 6v4M6 8l2 2 2-2" c="#3b6ea5" /></SmallRow>
              <SmallRow><MiniIcon d="M2 4l4 7 4-7-4-3z" c="#c4c4c4" /></SmallRow>
            </SmallColumn>
          </PanelBody>
          <PanelLabel>View</PanelLabel>
        </Panel>
        <Panel $w={42}>
          <PanelBody $pl={5}>
            <SmallColumn $w={36}>
              <SmallRow $h={22}><RulerWide /><Caret /></SmallRow>
              <SmallRow $h={24}><DiagonalBig /><Caret $ml={2} /></SmallRow>
            </SmallColumn>
          </PanelBody>
          <PanelLabel>Measure</PanelLabel>
        </Panel>
        <Panel $w={50}>
          <PanelBody $pl={1}>
            <CreateGrid>
              <DashedBox />
              <DashedBox />
              <CreateGroupIcon />
              <SmallCreateIcon />
            </CreateGrid>
          </PanelBody>
          <PanelLabel>Create</PanelLabel>
        </Panel>
        <Panel $w={172}>
          <PanelBody $pl={6}>
            <Tool $w={46}>
              <ToolIcon><JustifyIcon /></ToolIcon>
              Justification
            </Tool>
            <Tool $w={53} $active>
              <ToolIcon><AutoConnectIcon /></ToolIcon>
              Automatically<br />Connect
            </Tool>
            <Tool $w={33} $ml={2}>
              <ToolIcon><InheritElevationIcon /></ToolIcon>
              Inherit<br />Elevation
            </Tool>
            <Tool $w={28} $ml={2}>
              <ToolIcon><InheritSizeIcon /></ToolIcon>
              Inherit<br />Size
            </Tool>
          </PanelBody>
          <PanelLabel>Placement Tools</PanelLabel>
        </Panel>
        <Panel $w={70}>
          <PanelBody $pl={5}>
            <Tool $w={29} $active>
              <ToolIcon><AddVerticalIcon /></ToolIcon>
              Add<br />Vertical
            </Tool>
            <Tool $w={30} $ml={1}>
              <ToolIcon><ChangeSlopeIcon /></ToolIcon>
              Change<br />Slope
            </Tool>
          </PanelBody>
          <PanelLabel>Offset Connections</PanelLabel>
        </Panel>
        <Panel $w={50}>
          <PanelBody $pl={5}>
            <Tool $w={42}>
              <ToolIcon><TagPlacementIcon /></ToolIcon>
              Tag on<br />Placement
            </Tool>
          </PanelBody>
          <PanelLabel>Tag</PanelLabel>
        </Panel>
      </Ribbon>

      <OptionsBar>
        <OptionText $ml={9} $w={90} $muted>Modify | Place Conduit</OptionText>
        <OptionDivider $ml={9} />
        <OptionText $ml={10} $w={36}>Diameter:</OptionText>
        <Combo $ml={0} $w={60}>2"<Chev /></Combo>
        <OptionDivider $ml={7} />
        <OptionText $ml={15} $w={62}>Middle Elevation:</OptionText>
        <Combo $ml={0} $w={66}>9' 1 3/4"<Chev /></Combo>
        <Slot $ml={4}>
          <Icon>
            <rect x="1" y="5" width="8" height="6" fill="#fff" stroke="#444" />
            <path d="M6 5V3a2 2 0 0 1 4 0v1" stroke="#444" />
          </Icon>
        </Slot>
        <ApplyButton>Apply</ApplyButton>
        <OptionDivider $ml={6} />
        <Slot $ml={9}>
          <Icon s={10} vb={10}>
            <path d="M1 1v8h8M3 4h5M3 6h5" stroke="#444" />
          </Icon>
        </Slot>
        <Combo $ml={1} $w={54} $disabled>Horizontal<Chev c="#aaa" /></Combo>
        <Combo $ml={3} $w={28} $disabled>Tags...</Combo>
        <CheckBox />
        <OptionText $ml={2} $w={24} $muted>Leader</OptionText>
        <Slot $ml={8}>
          <Icon>
            <path d="M1 2v8M11 2v8M1 6h10" stroke="#333" />
          </Icon>
        </Slot>
        <WideInput>1/2"</WideInput>
      </OptionsBar>

      <DocTabs>
        <DocTab $w={90} $pl={8}><HouseIcon c="#999" />{'{3D}'}</DocTab>
        <DocTab $w={85} $active $pl={6}><PageIcon />1 - Power<TabClose><WinClose s={8} /></TabClose></DocTab>
        <DocTab $w={100} $pl={3}><PageIcon />1 - Power - Callout 1</DocTab>
        <DocTab $w={87} $ml={5} $pl={5}><SectionIcon c="#888" />Section 1</DocTab>
        <DocTab $w={60} $pl={3}><SectionIcon c="#888" />Section 4</DocTab>
        <TabMenu><Chev c="#444" /></TabMenu>
      </DocTabs>

      <Workspace>
        <DrawingArea><Drawing /></DrawingArea>
        <VScroll>
          <ArrowSlot><Chev c="#555" up /></ArrowSlot>
          <VThumb />
          <ArrowSlot><Chev c="#555" /></ArrowSlot>
        </VScroll>
        <CancelStrip>Cancel</CancelStrip>
        <NavBar>
          <Icon s={18} vb={18}>
            <circle cx="8" cy="9" r="6" stroke="#bbb" strokeWidth="1.4" />
            <circle cx="8" cy="9" r="3" stroke="#bbb" />
            <path d="M11 14h6" stroke="#7c9cc4" strokeWidth="2" />
          </Icon>
          <NavCaret />
          <NavRule />
          <Icon s={16} vb={16}>
            <rect x="2" y="1" width="9" height="9" fill="#a7c38d" stroke="#9ab080" />
            <circle cx="11" cy="11" r="2.5" stroke="#777" />
            <path d="M13 13l2 2" stroke="#777" />
          </Icon>
          <NavCaret />
        </NavBar>
        <PropsPalette>
          <PaletteTitle>
            Properties
            <WinClose s={8} />
          </PaletteTitle>
          <TypeRow>
            <TypePreview>
              <Icon s={43} vb={43}>
                <path d="M4 9 38 29" stroke="#555" strokeWidth="6" strokeLinecap="round" />
                <path d="M4 8 38 28" stroke="#9a9a9a" strokeWidth="2.5" />
              </Icon>
            </TypePreview>
            <TypeName>
              Conduit with Fittings
              <br />
              Rigid Nonmetallic Conduit<span>▾</span>
              <br />
              (RNC Sch 40)
            </TypeName>
          </TypeRow>
          <InstanceRow>
            <InstanceCombo>New Conduits<Chev /></InstanceCombo>
            <EditType><TypePropsSmall />Edit Type</EditType>
          </InstanceRow>
          <PropTable>
            {propSections.map((section) => (
              <React.Fragment key={section.title}>
                <SectionRow>{section.title}<FoldMark /></SectionRow>
                {section.rows.map((row) => (
                  <PropRow key={row.name} $muted={row.muted}>
                    <PropName>{row.name}</PropName>
                    <PropValue $focus={row.focus}>{row.value}</PropValue>
                  </PropRow>
                ))}
              </React.Fragment>
            ))}
          </PropTable>
          <PaletteBlank />
          <PaletteFoot>
            <HelpLink>Properties help</HelpLink>
            <DimApply>Apply</DimApply>
          </PaletteFoot>
          <PaletteTabs>
            <PaletteTab $w={75}>Project Browser -...</PaletteTab>
            <PaletteTab $w={45} $on>Properties</PaletteTab>
            <PaletteTab $w={36} />
          </PaletteTabs>
        </PropsPalette>
      </Workspace>

      <ViewBar>
        <ScaleText>1/4" = 1'-0"</ScaleText>
        <StatusIcons list={viewBarIcons} />
        <LeftCaret $ml={6} />
        <HThumb />
        <ScrollEnd><Icon s={6} vb={6}><path d="M2 1l2 2-2 2" stroke="#444" /></Icon></ScrollEnd>
      </ViewBar>

      <StatusBar>
        <ReadyText>Ready</ReadyText>
        <Slot $ml={1}>
          <Icon>
            <circle cx="6" cy="2.5" r="2" fill="#7fb069" />
            <rect x="2" y="5" width="3" height="6" fill="#5b8fc4" />
            <rect x="7" y="5" width="3" height="6" fill="#c8c8c8" stroke="#777" strokeWidth=".5" />
          </Icon>
        </Slot>
        <StatusCombo $w={136} $ml={1}><span /><Chev c="#aaa" /></StatusCombo>
        <Slot $ml={7}>
          <MiniIcon d="M3 2h6v2L5 11H3l3-7H3z" c="#a8a8a8" />
        </Slot>
        <StatusCount $ml={2}>:0</StatusCount>
        <Slot $ml={18}>
          <Icon>
            <rect x="1" y="1" width="10" height="10" fill="#fff" stroke="#444" />
            <path d="M3 4h6M3 6.5h6M3 9h6" stroke="#444" />
          </Icon>
        </Slot>
        <Slot $ml={5}>
          <Icon>
            <rect x="2" y="1" width="8" height="10" fill="#999" stroke="#888" />
          </Icon>
        </Slot>
        <StatusCombo $w={136} $ml={5}>Main Model<Chev c="#aaa" /></StatusCombo>
        <Slot $ml={152}><StatusIcons list={statusIcons} /></Slot>
        <StatusCount $ml={1}>:0</StatusCount>
      </StatusBar>
      <BottomEdge><RedMark /></BottomEdge>
    </Window>
  </>
);

export default App;
